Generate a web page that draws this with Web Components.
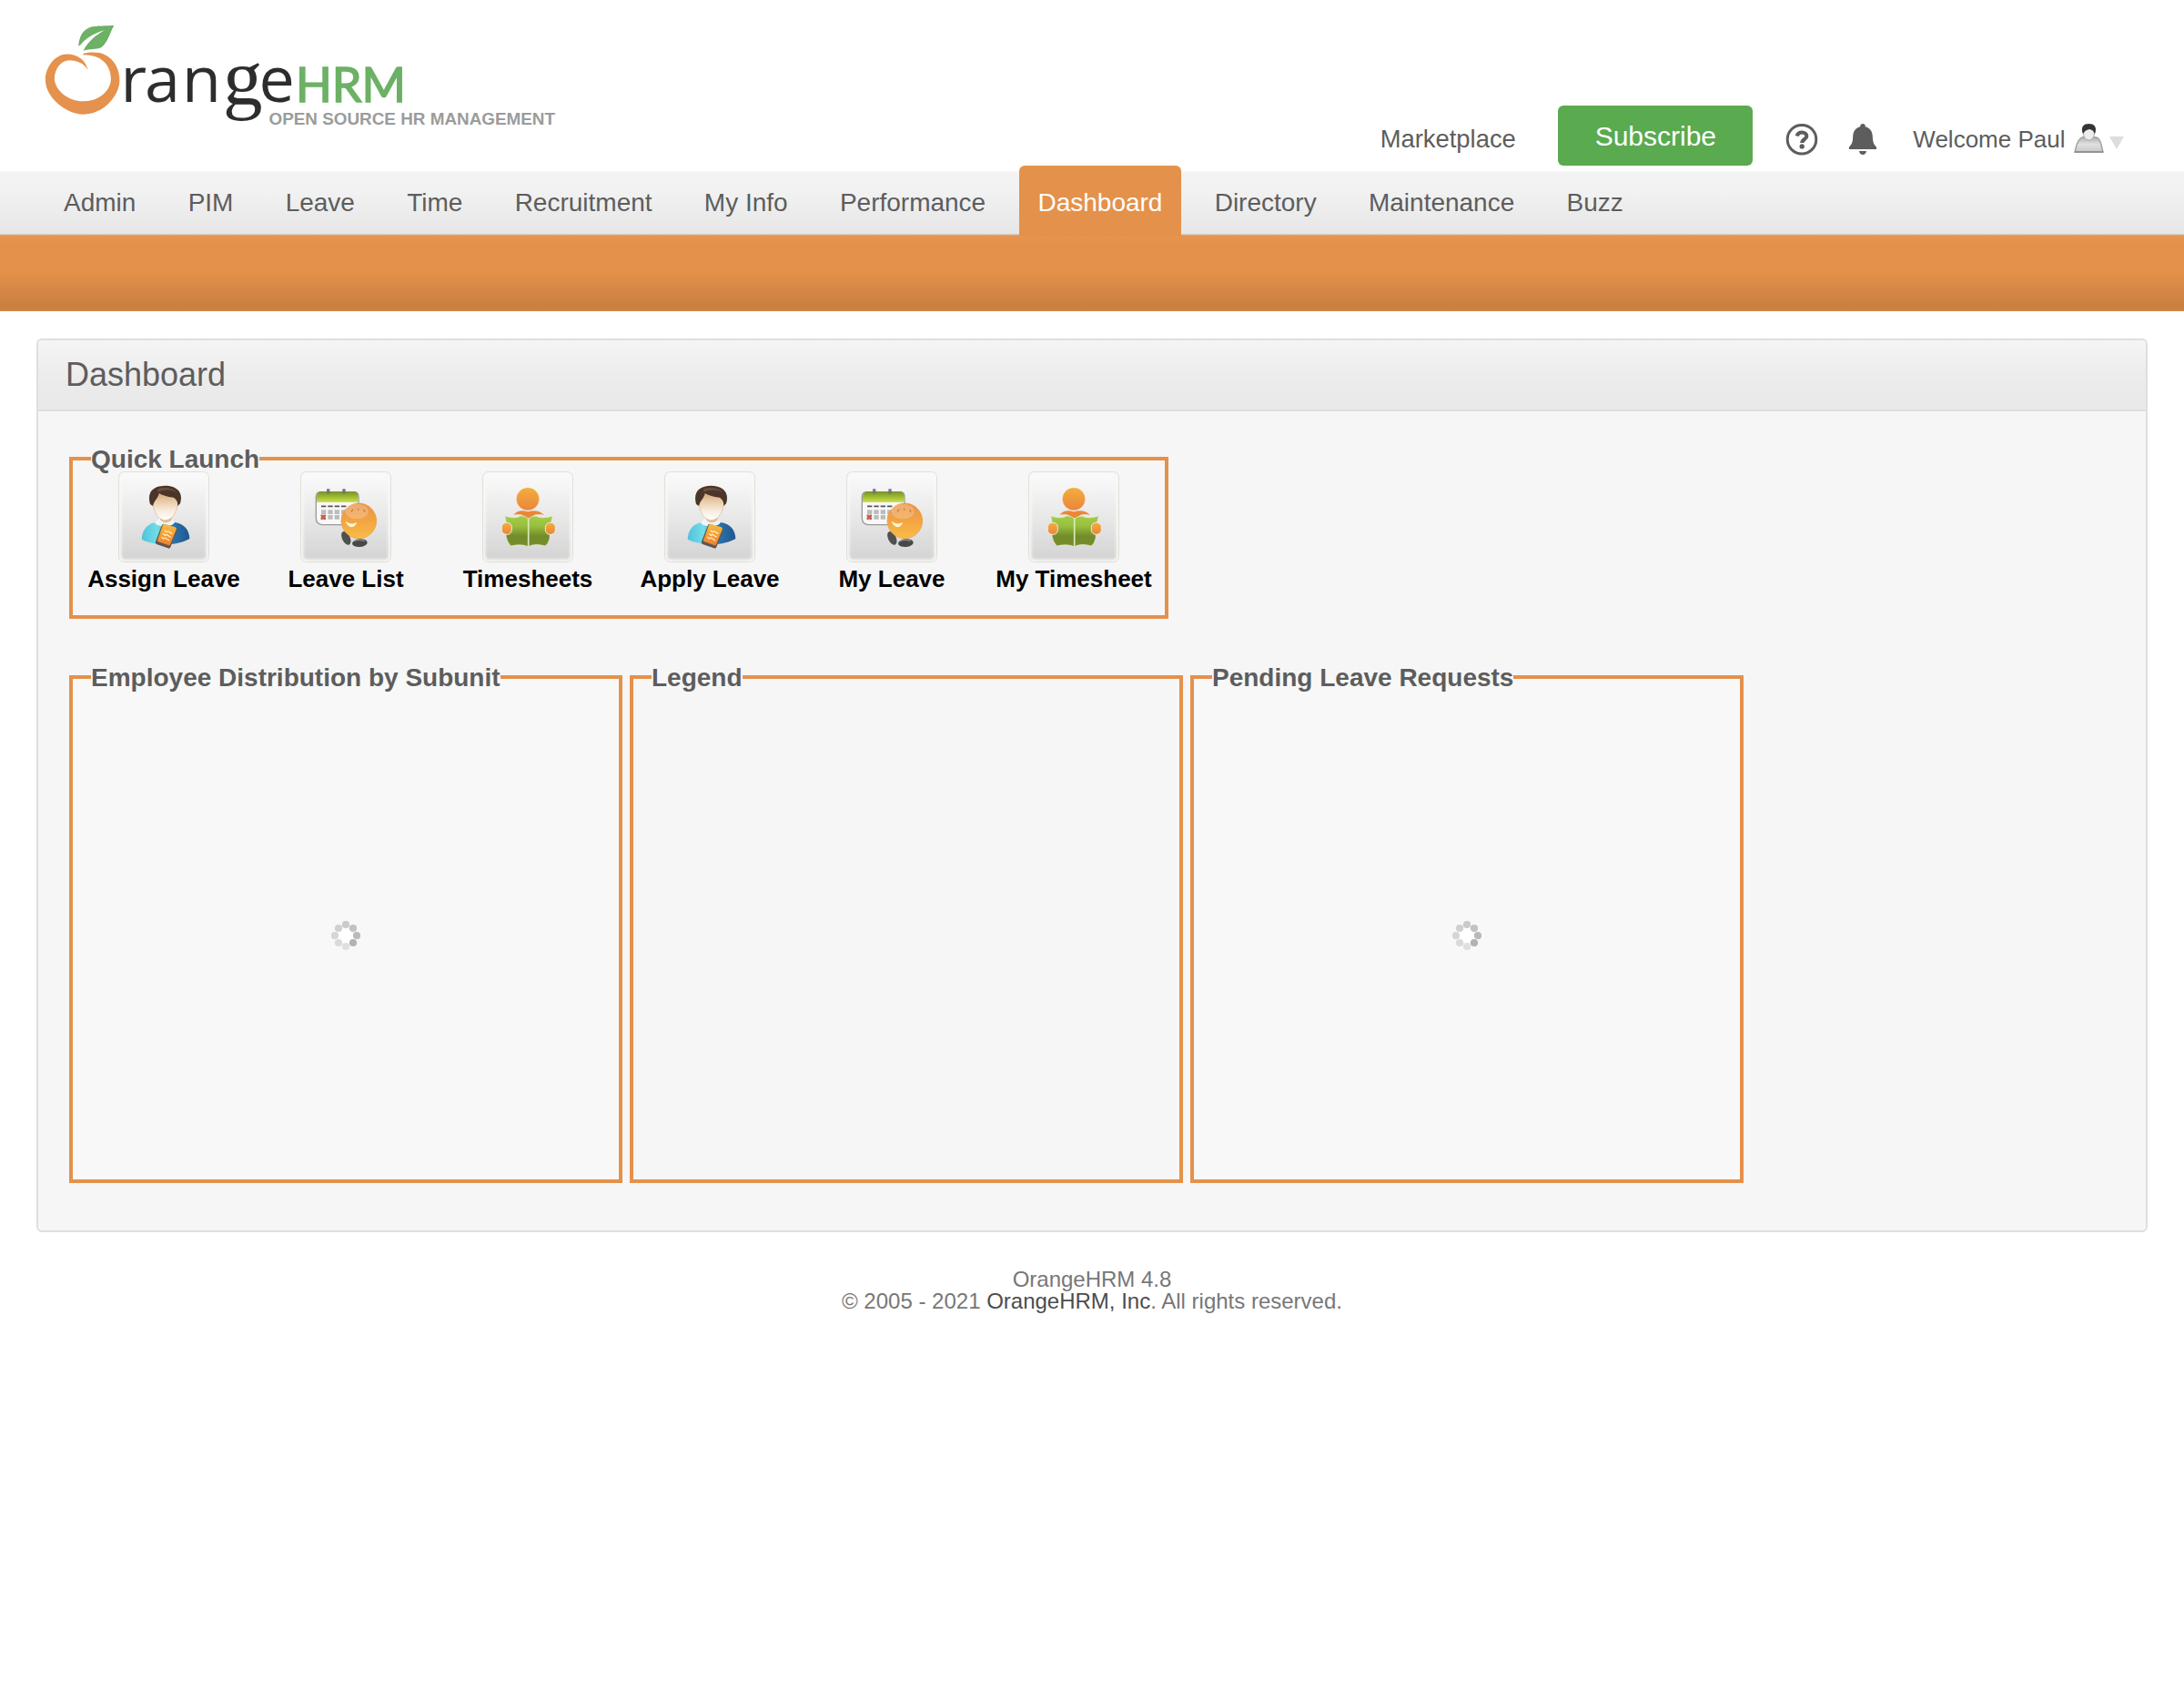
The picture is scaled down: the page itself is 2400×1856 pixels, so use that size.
<!DOCTYPE html>
<html lang="en">
<head>
<meta charset="utf-8">
<title>OrangeHRM</title>
<style>
html, body { margin: 0; padding: 0; background: #fff; }
body { font-family: "Liberation Sans", Arial, sans-serif; color: #5d5d5d; }
</style>
</head>
<body>
<hrm-app></hrm-app>
<script>
const define = (name, html) => customElements.define(name, class extends HTMLElement {
  constructor() {
    super();
    this.attachShadow({ mode: 'open' });
  }
  connectedCallback() {
    if (this.shadowRoot.childNodes.length) return;
    const t = document.createElement('template');
    t.innerHTML = typeof html === 'function' ? html(this) : html;
    this.shadowRoot.appendChild(t.content.cloneNode(true));
  }
});

define('hrm-logo', `
<style>:host{display:block;width:600px;height:150px} svg{display:block}</style>
<svg width="600" height="150" viewBox="30 10 600 150">
  <g transform="translate(30 10) scale(.38265 .33333)">
    <path fill="#6cb165" d="M249 54C232 55 196 54 180 60C158 70 149 92 147 122L153 118C166 98 190 80 222 70C196 86 174 108 161 137C180 131 198 134 212 127C232 110 236 80 249 54Z"/>
    <path fill="#e4924d" d="M160 147C180 141 206 141 222 150C252 166 266 202 265 238C263 290 216 347 162 347C108 345 54 290 52 236C50 198 76 152 108 149C142 146 168 168 174 201C166 188 158 172 122 169C96 168 79 198 78 228C78 262 112 304 162 304C208 304 239 268 240 232C241 196 222 150 160 151Z"/>
  </g>
  <text x="132.500 159 200 245 284.500" y="112" font-family="Open Sans, sans-serif" font-size="70" font-weight="400" fill="#2b2d2f">ran<tspan font-family="Liberation Serif, serif" font-size="87" dy="2">g</tspan><tspan dy="-2">e</tspan></text>
  <text x="325" y="112" font-family="Lato, sans-serif" font-size="52" font-weight="400" fill="#6cb165" stroke="#6cb165" stroke-width="1.500" textLength="121" lengthAdjust="spacingAndGlyphs">HRM</text>
  <text x="295.500" y="137" font-family="Liberation Sans, sans-serif" font-size="19" font-weight="700" fill="#9a9c9b" textLength="314.500" lengthAdjust="spacingAndGlyphs">OPEN SOURCE HR MANAGEMENT</text>
</svg>`);

define('hrm-header', `
<style>
:host{display:flex;height:188px;justify-content:space-between;box-sizing:border-box;padding:10px 66px 0 30px}
.r{display:flex;align-items:flex-start;padding-top:106px;font-size:26px;line-height:30px}
.m{font-size:27.400px;margin:22px 46.500px 0 0}
.s{width:214px;height:66px;box-sizing:border-box;border-radius:6px;background:#5aaa50;color:#fff;font-size:30px;line-height:68px;text-align:center;margin-right:36px}
svg{display:block}
.q{margin:20px 34px 0 0}.b{margin:20px 40px 0 0}.w{margin:22px 9px 0 0;white-space:nowrap}.a{margin:20px 6.500px 0 0}.t{margin-top:34px}
</style>
<hrm-logo></hrm-logo>
<div class="r">
 <span class="m">Marketplace</span><span class="s">Subscribe</span>
 <svg class="q" width="36" height="36" viewBox="0 0 36 36"><circle cx="18" cy="17.200" r="15.800" fill="none" stroke="#5d5d5d" stroke-width="3"/><path d="M12.700 13.500C13.400 10.600 15.400 9.500 18.200 9.500C21 9.500 23.300 11 23.300 13.700C23.300 17.200 18.300 17 18.300 21" fill="none" stroke="#5d5d5d" stroke-width="4.200"/><circle cx="18.200" cy="24.900" r="2.700" fill="#5d5d5d"/></svg>
 <svg class="b" width="30" height="36" viewBox="0 0 30 36"><path fill="#5d5d5d" d="M15 0C17 0 18 1.500 17.800 3.200C23 4.500 25.600 8.500 25.800 14C26 20 27 22.500 30 25.500V28H0V25.500C3 22.500 4 20 4.200 14C4.400 8.500 7 4.500 12.200 3.200C12 1.500 13 0 15 0ZM11 30H19C18.600 32.500 17 34 15 34C13 34 11.400 32.500 11 30Z"/></svg>
 <span class="w">Welcome Paul</span>
 <svg class="a" width="33" height="34" viewBox="0 0 33 34"><defs><linearGradient id="g" x2="0" y2="1"><stop stop-color="#aaa"/><stop offset=".5" stop-color="#e0e0e0"/><stop offset="1" stop-color="#c8c8c8"/></linearGradient></defs><path d="M8 15.500C11 13.500 21 13.500 26 15.500C30.500 19 30 25 32 31H1C2.500 25 3 19 8 15.500Z" fill="url(#g)" stroke="#a0a0a0" stroke-width="1.500"/><path d="M1 31H32" stroke="#888" stroke-width="1.500"/><ellipse cx="16.500" cy="10.500" rx="6" ry="7.500" fill="#ececec" stroke="#aaa" stroke-width="1"/><path d="M9.500 10C7.500 3 11 0 16.500 0C22 0 25.500 3 23.500 10L22.500 11C22 7.500 20 7 17 6C13.500 7 11.500 8 10.500 11Z" fill="#353535"/></svg>
 <svg class="t" width="16" height="14" viewBox="0 0 16 14"><path fill="#ddd" d="M0 0H16L8 14Z"/></svg>
</div>`);

define('hrm-nav', `
<style>
:host{display:block}
nav{display:flex;height:70px;box-sizing:border-box;padding-left:49.500px;align-items:flex-end;background:linear-gradient(#f8f8f8 0,#f3f3f3 2px,#f2f2f2 30%,#e6e6e6 69px,#d2c9c0 69px)}
.bar{height:84px;background:linear-gradient(#e0a470 0,#e0a470 1px,#e6954f 1px,#e4914b 12%,#e4914b 48%,#cb8041 92%,#cb8041 96%,#d18748 100%)}
</style>
<nav><slot></slot></nav><div class="bar"></div>`);

define('hrm-tab', `
<style>
:host{display:block;box-sizing:border-box;height:70px;padding:0 20.500px;margin-right:16.250px;font-size:28px;line-height:32px;padding-top:19px;white-space:nowrap}
:host([active]){height:77px;margin-bottom:-1px;padding-top:25px;background:#e4914b;color:#fff;border-radius:6px 6px 0 0}
</style><slot></slot>`);

define('hrm-panel', el => `
<style>
:host{display:block;margin:30px 40px 0;height:982px;box-sizing:border-box;border:2px solid #dedede;border-radius:6px;background:#f6f6f6;overflow:hidden}
h1{margin:0;height:78px;box-sizing:border-box;border-bottom:2px solid #dedede;padding-left:30px;font-size:36px;font-weight:400;line-height:76px;background:linear-gradient(#f5f5f5,#ebebeb 60%,#e9e9e9)}
.c{padding:50px 34px 0}
</style><h1>${el.getAttribute('heading')}</h1><div class="c"><slot></slot></div>`);

define('hrm-group', el => `
<style>
:host{display:block}
fieldset{margin:0;min-width:0;box-sizing:border-box;height:100%;border:4px solid #e4914b;border-top:0;display:flex;flex-direction:column;padding:0}
.head{display:flex;height:4px;align-items:center;z-index:1}
.head i{height:4px;background:#e4914b;width:20px}.head i:last-child{flex:1}
.head span{position:relative;z-index:1;font-size:28px;font-weight:700;line-height:32px;padding-top:2px;white-space:nowrap}
.in{display:flex;flex:1;padding-top:var(--inset,0)}
</style><fieldset><div class="head"><i></i><span>${el.getAttribute('label')}</span><i></i></div><div class="in"><slot></slot></div></fieldset>`);

const art = {
 person: `
 <path d="M107 248C108 214 130 194 156 192H216C246 196 264 216 265 246C240 258 220 264 190 264C156 264 130 260 107 248Z" fill="url(#shirt)"/>
 <path d="M150 194C160 208 206 210 216 192L204 176H166Z" fill="#eef6fa"/><path d="M168 170H206V184C196 196 178 196 168 184Z" fill="#e2bc98"/>
 <path d="M143 112C146 86 226 84 228 114C228 146 214 184 184 185C156 184 142 146 143 112Z" fill="url(#face)" stroke="#d9b592" stroke-width="2"/>
 <path d="M135 132C124 90 146 72 184 71C222 71 246 92 234 130L226 138C226 124 222 116 212 110C190 108 174 102 164 96C162 112 148 120 144 138Z" fill="#4b3529"/><path d="M160 82C176 74 212 78 222 92C204 84 180 82 160 92Z" fill="#6b4e3e"/>
 <path d="M182 198L220 210Q226 212 224 218L202 274Q199 280 193 277L156 264Q150 261 153 255L173 203Q176 196 182 198Z" fill="#5d5753"/><path d="M184 198L218 208Q223 210 221 216L202 264Q199 269 194 267L162 256Q157 254 160 248L176 203Q179 196 184 198Z" fill="url(#phone)"/>
 <path d="M182 218L189 224L194 221L208 230M177 229L184 235L189 232L203 241M172 240L179 246L184 243L198 252" fill="none" stroke="#ffe9b4" stroke-width="4"/>`,
 calendar: `
 <path d="M96 92H208Q222 92 222 108V200H104Q82 200 82 178V108Q82 92 96 92Z" fill="#f8f8f8" stroke="#9b9b9b" stroke-width="4"/>
 <path d="M98 90H208Q220 92 221 106V126H84V106Q86 92 98 90Z" fill="url(#green)"/>
 <path d="M122 82V98M174 82V98" stroke="#777" stroke-width="10"/>
 <path d="M99 139H182" stroke="#555" stroke-width="5" stroke-dasharray="16 6"/>
 <path d="M99 158H182M121 175H182" stroke="#bcbcbc" stroke-width="14" stroke-dasharray="16 6"/><path d="M99 168L113 182M113 168L99 182" stroke="#c65b4b" stroke-width="7"/><path d="M98 167H114V183H98Z" fill="#c65b4b" opacity=".5"/>
 <ellipse cx="181" cy="244" rx="13" ry="24" transform="rotate(-26 181 244)" fill="#505050"/><ellipse cx="226" cy="260" rx="25" ry="13" transform="rotate(-5 226 260)" fill="#484848"/><path d="M207 254Q224 246 242 254" stroke="#8c8c8c" stroke-width="4" fill="none"/>
 <circle cx="223" cy="187" r="58" fill="url(#ball)" stroke="#ee9a3e" stroke-width="2"/><ellipse cx="216" cy="156" rx="38" ry="25" fill="#fff" opacity=".22"/>
 <path d="M198 157L204 149M221 152V146M243 158L239 150" stroke="#dd762c" stroke-width="4"/>
 <path d="M179 188Q198 202 216 192Q212 207 200 208Q184 206 179 188Z" fill="#fff4cf"/>`,
 reader: `
 <circle cx="180" cy="115" r="38" fill="url(#or)" stroke="#fff" stroke-opacity=".4" stroke-width="3"/>
 <path d="M133 167C145 154 160 151 180 157C202 151 218 154 234 167C218 166 206 164 198 171L182 180L166 171C158 164 146 166 133 167Z" fill="#eb8739"/>
 <path d="M104 171Q142 182 156 170Q174 171 182 180Q194 170 207 171Q224 182 263 171Q254 190 252 246Q248 262 238 270Q204 260 182 272Q158 262 124 270Q112 258 108 238Q112 196 104 171Z" fill="url(#book)" stroke="#eaf2d8" stroke-width="2"/>
 <path d="M182 178V273" stroke="#dceabb" stroke-width="5"/>
 <rect x="94" y="193" width="33" height="39" rx="15" fill="url(#or)" stroke="#ededed" stroke-width="3"/><rect x="238" y="193" width="33" height="39" rx="15" fill="url(#or)" stroke="#ededed" stroke-width="3"/>`
};
const lg = (id, stops, a = 'x2="0" y2="1"') => `<linearGradient id="${id}" ${a}>${stops.map((s, i) => `<stop offset="${i / (stops.length - 1)}" stop-color="${s}"/>`).join('')}</linearGradient>`;

define('hrm-shortcut', el => `
<style>
:host{display:flex;flex-direction:column;align-items:center;width:200px;flex:none;color:#000;font-size:26px;font-weight:700;line-height:30px;white-space:nowrap}
svg{display:block;margin-bottom:2.500px}
</style>
<svg width="100" height="100" viewBox="30 24 300 300"><defs>
${lg('tile', ['#fafafa', '#e8e8e8', '#d4d4d4'])}${lg('shirt', ['#4fc3da', '#74dce8', '#2c72aa', '#1f5690'], '')}${lg('face', ['#cfa273', '#e9cba8', '#f8ecde', '#fff'])}
${lg('phone', ['#f6bd42', '#ee7f2d'])}${lg('green', ['#76922a', '#9dbb31', '#cfe052'])}${lg('ball', ['#e8924c', '#f3a443', '#f8bd45'])}${lg('or', ['#f4ae3c', '#ea853b'])}${lg('book', ['#a5cc47', '#98c03e', '#738b29', '#768f2c'])}
<filter id="soft" x="-10%" y="-10%" width="120%" height="120%"><feGaussianBlur stdDeviation="4"/></filter></defs>
<rect x="31.500" y="25.500" width="297" height="297" rx="18" fill="#f8f8f4" stroke="#deded9" stroke-width="3"/>
<rect x="40" y="34" width="280" height="280" rx="12" fill="url(#tile)" filter="url(#soft)"/>
${art[el.getAttribute('icon')]}</svg><span><slot></slot></span>`);

define('hrm-spinner', () => {
  const dots = [[0, -12, '#cbcbc9'], [8, -8, '#c2c2c0'], [12, 0, '#bababa'], [8, 8, '#b3b3b3'], [0, 12, '#dfdfdd'], [-8, 8, '#dadad8'], [-12, 0, '#d5d5d3'], [-8, -8, '#d0d0ce']];
  return `<style>:host{display:flex;width:600px;align-items:center;justify-content:center;background:#f8f8f8;box-sizing:border-box;padding-top:14px}svg{display:block}</style>
  <svg width="32" height="32" viewBox="-16 -16 32 32"><circle r="9" fill="#fff"/>${dots.map(d => `<circle cx="${d[0]}" cy="${d[1]}" r="4.100" fill="${d[2]}"/>`).join('')}</svg>`;
});

define('hrm-footer', `
<style>:host{display:block;margin-top:40px;padding-bottom:6px;text-align:center;font-size:24px;line-height:24px;color:#777}b{font-weight:400;color:#4d4d4d}</style>
<div>OrangeHRM 4.8</div><div>© 2005 - 2021 <b>OrangeHRM, Inc</b>. All rights reserved.</div>`);

define('hrm-app', `
<style>
:host{display:block}
.q{width:1208px;height:178px;--inset:12px}
.row{display:flex;gap:8px;margin-top:62px}
.row hrm-group{width:608px;height:558px}
</style>
<hrm-header></hrm-header>
<hrm-nav><hrm-tab>Admin</hrm-tab><hrm-tab>PIM</hrm-tab><hrm-tab>Leave</hrm-tab><hrm-tab>Time</hrm-tab><hrm-tab>Recruitment</hrm-tab><hrm-tab>My Info</hrm-tab><hrm-tab>Performance</hrm-tab><hrm-tab active>Dashboard</hrm-tab><hrm-tab>Directory</hrm-tab><hrm-tab>Maintenance</hrm-tab><hrm-tab>Buzz</hrm-tab></hrm-nav>
<hrm-panel heading="Dashboard">
 <hrm-group class="q" label="Quick Launch"><hrm-shortcut icon="person">Assign Leave</hrm-shortcut><hrm-shortcut icon="calendar">Leave List</hrm-shortcut><hrm-shortcut icon="reader">Timesheets</hrm-shortcut><hrm-shortcut icon="person">Apply Leave</hrm-shortcut><hrm-shortcut icon="calendar">My Leave</hrm-shortcut><hrm-shortcut icon="reader">My Timesheet</hrm-shortcut></hrm-group>
 <div class="row"><hrm-group label="Employee Distribution by Subunit"><hrm-spinner></hrm-spinner></hrm-group><hrm-group label="Legend"></hrm-group><hrm-group label="Pending Leave Requests"><hrm-spinner></hrm-spinner></hrm-group></div>
</hrm-panel>
<hrm-footer></hrm-footer>`);
</script>
</body>
</html>
